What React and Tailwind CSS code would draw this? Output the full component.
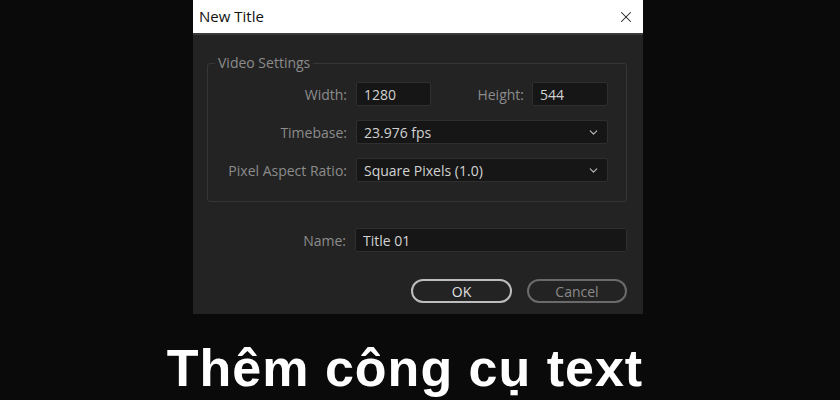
import React from 'react';
import { X, ChevronDown } from 'lucide-react';

const labelCls = 'text-[14px] text-[#8c8c8c] text-right';
const inputCls =
  'h-[24px] bg-[#161616] border border-[#2f2f2f] rounded-[2px] text-[14px] text-[#d2d2d2] px-[7px] flex items-center';

const Select = ({ value }) => (
  <div className={`${inputCls} w-[252px] justify-between`}>
    <span>{value}</span>
    <ChevronDown size={13} strokeWidth={2} className="text-[#bdbdbd]" />
  </div>
);

const App = () => {
  return (
    <div
      className="w-[840px] h-[400px] bg-[#0a0a0a] flex flex-col items-center overflow-hidden"
      style={{ fontFamily: '"Open Sans", "Noto Sans", sans-serif' }}
    >
      {/* Dialog */}
      <div className="w-[450px] h-[314px] ml-[-4px] flex flex-col bg-[#232323]">
        <div className="h-[35px] bg-white flex items-center justify-between pl-[6px] pr-[8px] border-b-2 border-[#3a3a3a]">
          <span className="text-[15px] text-[#111]">New Title</span>
          <X size={18} strokeWidth={1.4} className="text-[#222]" />
        </div>

        <div className="pl-[14px] pr-[16px] pt-[20px] flex flex-col">
          {/* Video Settings group */}
          <fieldset className="border border-[#363636] rounded-[3px] px-[0px] pt-[11px] pb-[19px]">
            <legend className="ml-[7px] px-[3px] text-[14px] text-[#8c8c8c] leading-[16px]">Video Settings</legend>
            <div className="flex flex-col gap-[14px]">
              <div className="flex items-center">
                <span className={`${labelCls} w-[139px]`}>Width:</span>
                <div className={`${inputCls} ml-[9px] w-[75px]`}>1280</div>
                <span className={`${labelCls} w-[93px]`}>Height:</span>
                <div className={`${inputCls} ml-[8px] w-[76px]`}>544</div>
              </div>
              <div className="flex items-center">
                <span className={`${labelCls} w-[139px]`}>Timebase:</span>
                <div className="ml-[9px]">
                  <Select value="23.976 fps" />
                </div>
              </div>
              <div className="flex items-center">
                <span className={`${labelCls} w-[139px]`}>Pixel Aspect Ratio:</span>
                <div className="ml-[9px]">
                  <Select value="Square Pixels (1.0)" />
                </div>
              </div>
            </div>
          </fieldset>

          {/* Name */}
          <div className="flex items-center mt-[26px]">
            <span className={`${labelCls} w-[139px]`}>Name:</span>
            <div className={`${inputCls} ml-[9px] w-[272px]`}>Title 01</div>
          </div>

          {/* Buttons */}
          <div className="flex justify-end gap-[15px] mt-[27px]">
            <button className="w-[101px] h-[24px] rounded-full border-2 border-[#bdbdbd] text-[14px] text-[#e0e0e0] flex items-center justify-center">
              OK
            </button>
            <button className="w-[100px] h-[24px] rounded-full border-2 border-[#6a6a6a] text-[14px] text-[#8a8a8a] flex items-center justify-center">
              Cancel
            </button>
          </div>
        </div>
      </div>

      {/* Caption */}
      <div
        className="mt-[24px] mr-[30px] text-white font-bold text-[52px] leading-[60px] tracking-[1px]"
        style={{ fontFamily: '"Liberation Sans", Arial, sans-serif' }}
      >
        Thêm công cụ text
      </div>
    </div>
  );
};

export default App;
